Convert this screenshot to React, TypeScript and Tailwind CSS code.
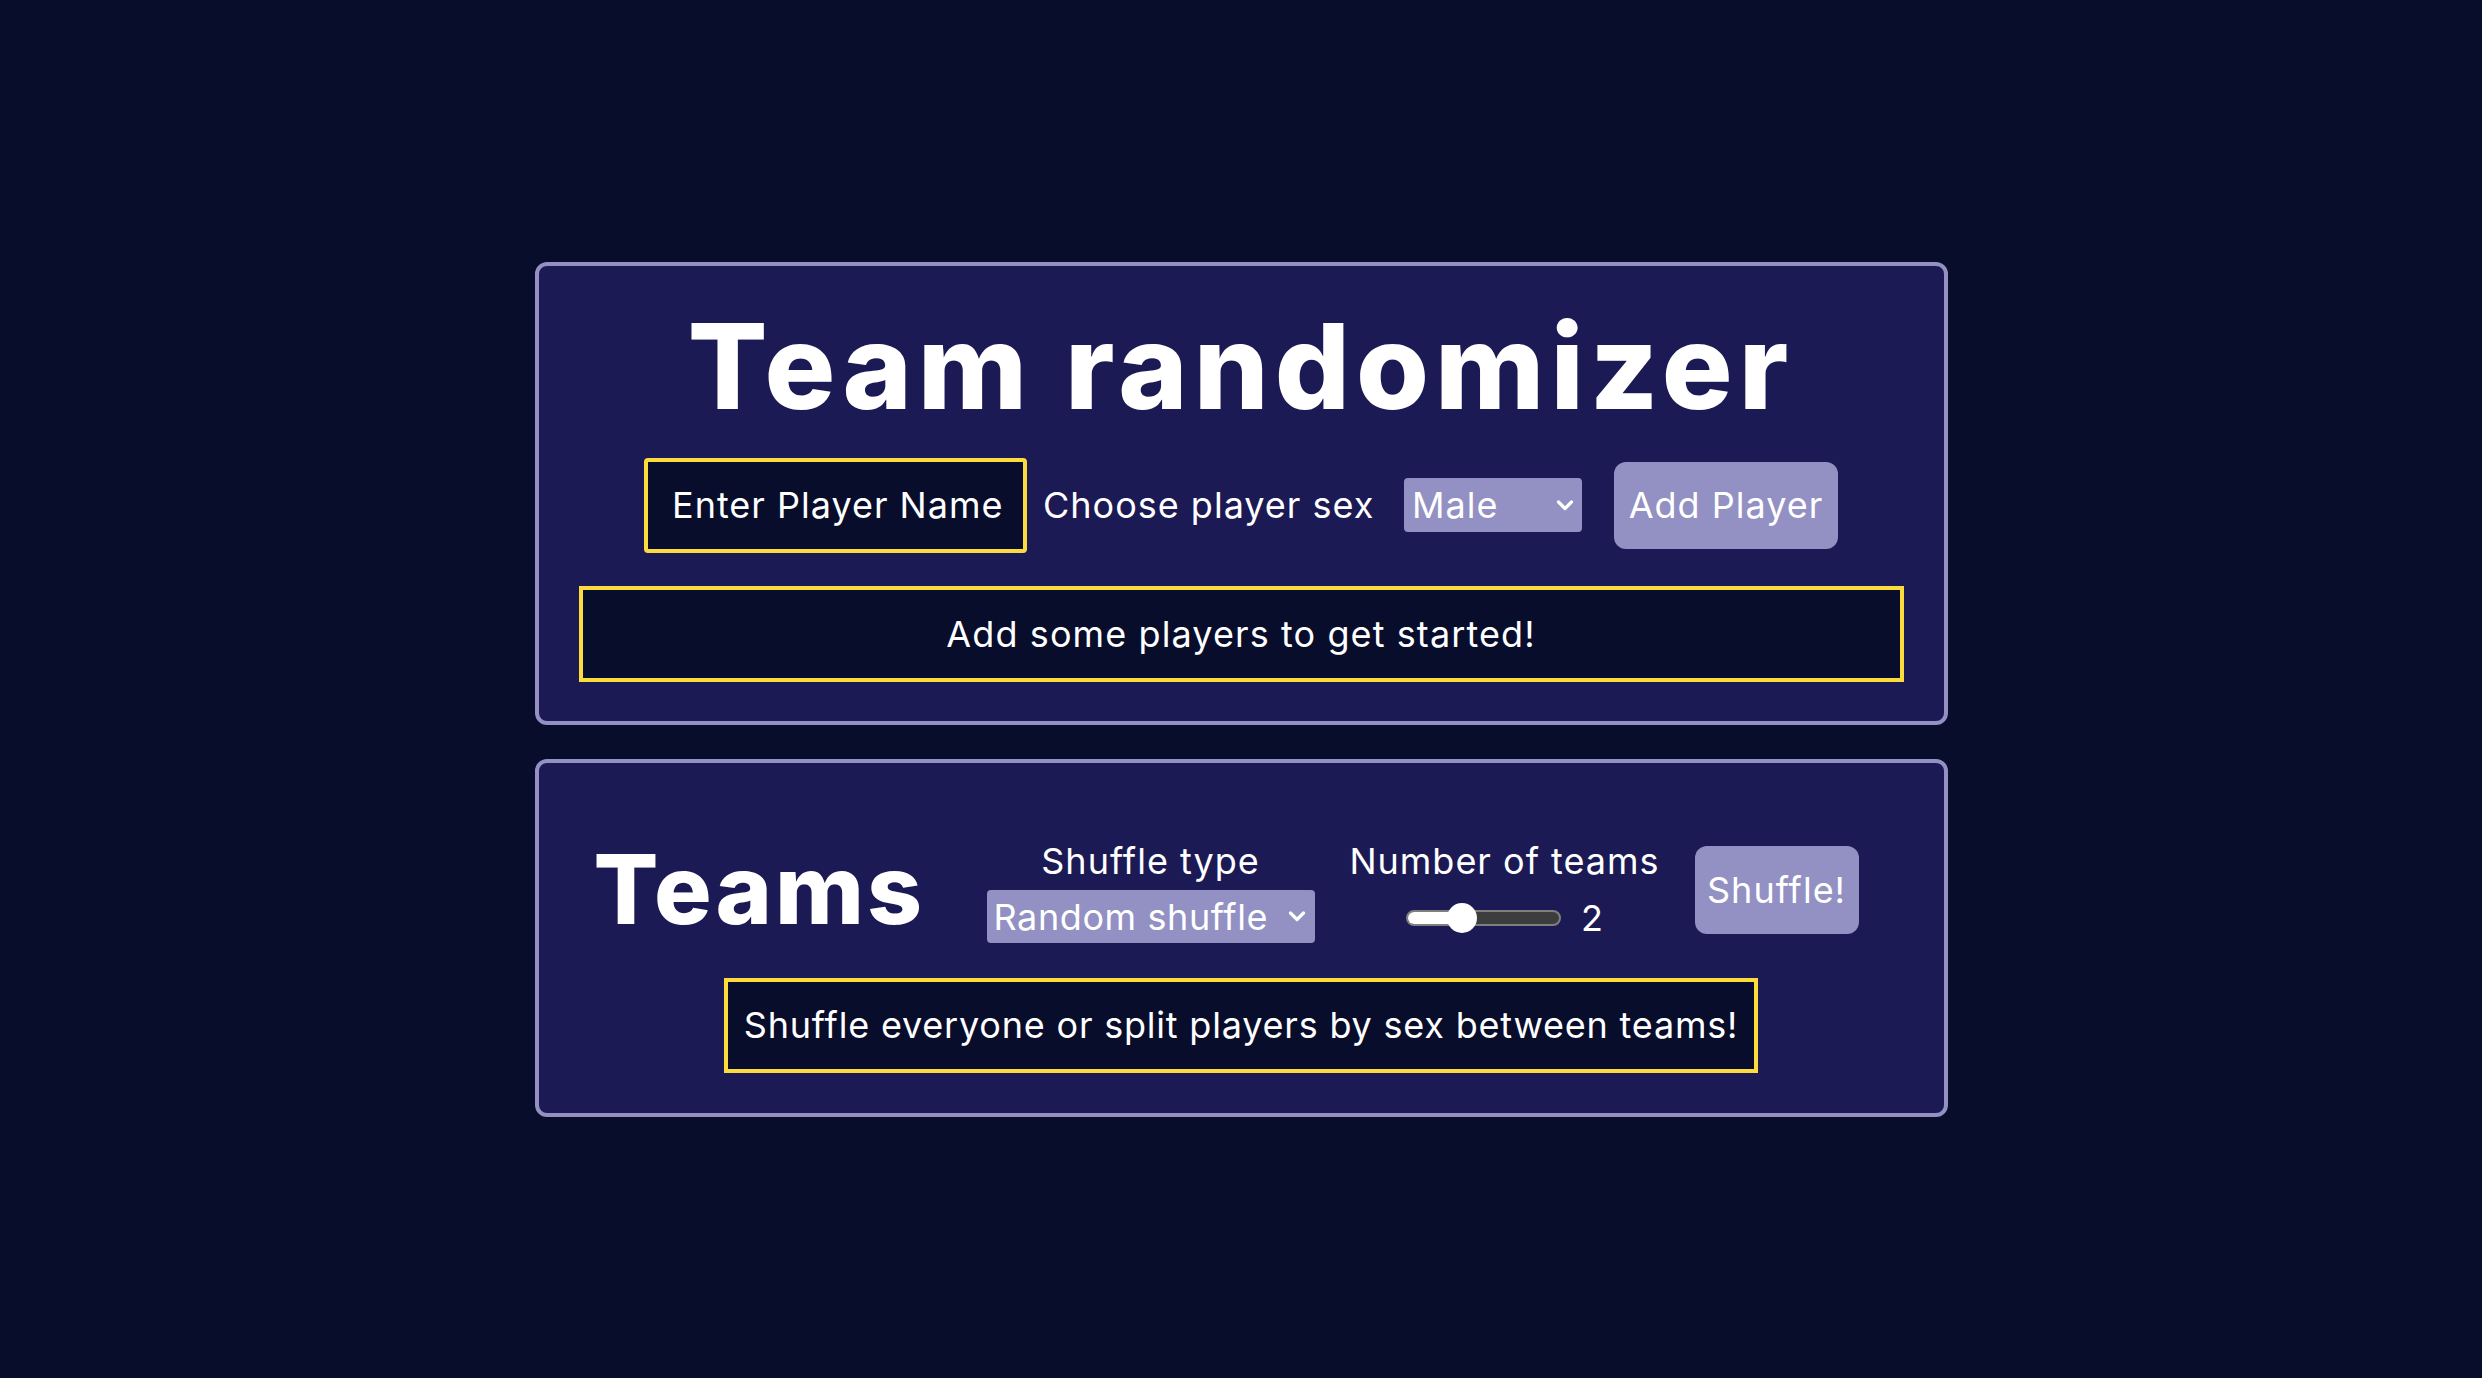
import React from "react";

function Chevron() {
  return (
    <svg width="18" height="11" viewBox="0 0 18 11" className="pointer-events-none">
      <polyline points="2.5,2 9,8.5 15.5,2" fill="none" stroke="white" strokeWidth="3.2" strokeLinecap="round" strokeLinejoin="round" />
    </svg>
  );
}

export default function App() {
  return (
    <div className="min-h-screen w-full bg-[#070d2b] flex flex-col items-center justify-center gap-[34px] font-['Inter',sans-serif] text-white">
      <section className="w-[1413px] border-[4px] border-[#9490c4] rounded-[12px] bg-[#1c1a54] pt-[41px] pb-[39px] px-[40px] flex flex-col">
        <h1 className="h-[118px] text-[118px] leading-none font-extrabold text-center tracking-[6px] whitespace-nowrap">Team randomizer</h1>
        <div className="mt-[33px] h-[95px] flex items-center justify-center">
          <input
            placeholder="Enter Player Name"
            className="w-[383px] h-[95px] bg-[#070d2b] border-[4px] border-[#fcdc3c] rounded-[4px] pl-[24px] text-[36px] tracking-[1px] text-white placeholder:text-white outline-none"
          />
          <div className="w-[377px] pl-[16px] text-[36px] tracking-[1px] leading-none whitespace-nowrap">Choose player sex</div>
          <div className="relative w-[178px] h-[54px] flex items-center">
            <select className="appearance-none w-full h-full bg-[#9390c3] rounded-[4px] pl-[8px] text-[36px] tracking-[1px] text-white outline-none">
              <option>Male</option>
              <option>Female</option>
            </select>
            <span className="absolute right-[8px] top-[22px] w-[18px] h-[11px] flex pointer-events-none">
              <Chevron />
            </span>
          </div>
          <button className="ml-[32px] w-[224px] h-[87px] bg-[#9390c3] rounded-[12px] text-[36px] tracking-[1px] text-white whitespace-nowrap">
            Add Player
          </button>
        </div>
        <div className="mt-[33px] h-[96px] bg-[#070d2b] border-[4px] border-[#fcdc3c] flex items-center justify-center text-[36px] tracking-[1.1px] whitespace-nowrap">
          Add some players to get started!
        </div>
      </section>

      <section className="w-[1413px] border-[4px] border-[#9490c4] rounded-[12px] bg-[#1c1a54] pt-[76px] pb-[40px] flex flex-col">
        <div className="flex items-start pl-[55px]">
          <h2 className="w-[393px] h-[100px] text-[96px] leading-[100px] font-extrabold tracking-[3px] whitespace-nowrap">Teams</h2>
          <div className="w-[328px] flex flex-col items-center">
            <div className="mt-[4px] h-[36px] text-[36px] tracking-[1px] leading-[36px] whitespace-nowrap">Shuffle type</div>
            <div className="relative mt-[11px] w-[328px] h-[53px]">
              <select className="appearance-none w-full h-full bg-[#9390c3] rounded-[4px] pl-[7px] text-[36px] tracking-[0.6px] text-white outline-none">
                <option>Random shuffle</option>
                <option>Split by sex</option>
              </select>
              <span className="absolute right-[9px] top-[21px] w-[18px] h-[11px] flex pointer-events-none">
                <Chevron />
              </span>
            </div>
          </div>
          <div className="w-[380px] flex flex-col items-center">
            <div className="mt-[4px] h-[36px] text-[36px] tracking-[1px] leading-[36px] whitespace-nowrap">Number of teams</div>
            <div className="mt-[24px] h-[30px] flex items-center gap-[20px]">
              <div className="relative w-[155px] h-[16px] rounded-full border-2 border-[#7f7f7f] bg-[#3d3d3d]">
                <div className="absolute left-0 top-0 h-full w-[55px] bg-white rounded-l-full" />
                <div className="absolute left-[39px] top-[-9px] w-[30px] h-[30px] rounded-full bg-white" />
              </div>
              <span className="text-[36px] leading-none">2</span>
            </div>
          </div>
          <button className="mt-[7px] w-[164px] h-[88px] bg-[#9390c3] rounded-[12px] text-[36px] tracking-[1px] text-white whitespace-nowrap">
            Shuffle!
          </button>
        </div>
        <div className="mt-[35px] self-center w-[1034px] h-[95px] bg-[#070d2b] border-[4px] border-[#fcdc3c] flex items-center justify-center text-[36px] tracking-[0.8px] whitespace-nowrap">
          Shuffle everyone or split players by sex between teams!
        </div>
      </section>
    </div>
  );
}
